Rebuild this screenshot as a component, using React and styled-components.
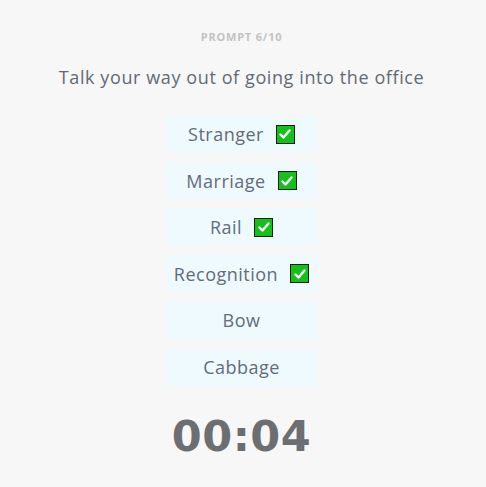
import React from "react";
import styled, { createGlobalStyle } from "styled-components";

const Global = createGlobalStyle`
  html, body { margin: 0; padding: 0; background: #f7f7f7; }
  body { font-family: "Open Sans", "Liberation Sans", sans-serif; }
`;

const Page = styled.div`
  width: 483px;
  min-height: 487px;
  box-sizing: border-box;
  padding-top: 30px;
  display: flex;
  flex-direction: column;
  align-items: center;
`;

const Counter = styled.div`
  font-size: 11px;
  font-weight: 700;
  letter-spacing: 0.8px;
  color: #c2c2c2;
  line-height: 14px;
`;

const Prompt = styled.h1`
  margin: 21px 0 0;
  font-size: 18px;
  font-weight: 400;
  letter-spacing: 0.6px;
  color: #636a74;
  line-height: 24px;
`;

const List = styled.div`
  margin-top: 26px;
  display: flex;
  flex-direction: column;
  gap: 8.6px;
`;

const Word = styled.div`
  width: 152px;
  height: 38px;
  background: #effaff;
  display: flex;
  align-items: center;
  justify-content: center;
  gap: 12px;
  font-size: 18px;
  letter-spacing: 0.5px;
  color: #626c7a;
`;

const Check = styled.span`
  width: 17px;
  height: 17px;
  background: #14c11a;
  border: 1.5px solid #1b1b1b;
  display: inline-flex;
  align-items: center;
  justify-content: center;
`;

const Timer = styled.div`
  margin-top: 23px;
  font-family: "DejaVu Sans", "Open Sans", sans-serif;
  font-size: 43px;
  font-weight: 700;
  letter-spacing: 0.5px;
  color: #6c6e72;
  line-height: 54px;
`;

const words = [
  { w: "Stranger", done: true },
  { w: "Marriage", done: true },
  { w: "Rail", done: true },
  { w: "Recognition", done: true },
  { w: "Bow", done: false },
  { w: "Cabbage", done: false },
];

export default function App() {
  return (
    <>
      <Global />
      <Page>
        <Counter>PROMPT 6/10</Counter>
        <Prompt>Talk your way out of going into the office</Prompt>
        <List>
          {words.map((x) => (
            <Word key={x.w}>
              {x.w}
              {x.done && (
                <Check>
                  <svg width="14" height="14" viewBox="0 0 14 14">
                    <path d="M2.5 7.5 L5.5 10.5 L11.5 3.5" fill="none" stroke="#fff" strokeWidth="2.4" strokeLinecap="round" strokeLinejoin="round" />
                  </svg>
                </Check>
              )}
            </Word>
          ))}
        </List>
        <Timer>00:04</Timer>
      </Page>
    </>
  );
}
